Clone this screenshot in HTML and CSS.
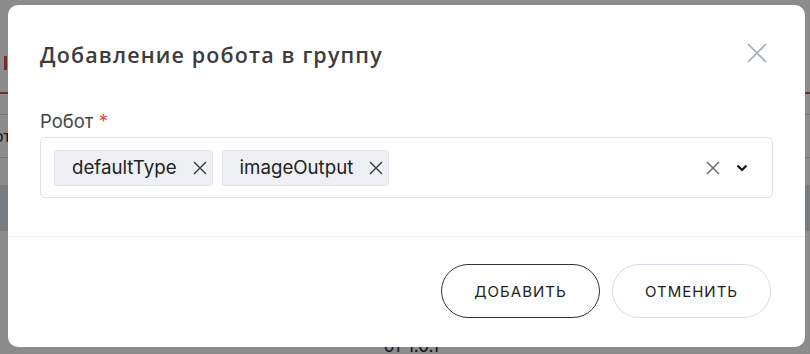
FILE: index.html
```html
<!DOCTYPE html>
<html lang="ru">
<head>
    <meta charset="UTF-8">
    <title>Добавление робота в группу</title>
    <link rel="stylesheet" href="styles.css">
</head>
<body>
    <div class="page-behind">
        <div class="behind-tab"></div>
        <div class="behind-line behind-line--red"></div>
        <div class="behind-line behind-line--one"></div>
        <div class="behind-text">от</div>
        <div class="behind-line behind-line--two"></div>
        <div class="behind-band"></div>
        <div class="behind-version">от 1.0.1</div>
    </div>

    <div class="overlay">
        <div class="modal">
            <div class="modal-header">
                <h2 class="modal-title">Добавление робота в группу</h2>
                <button class="modal-close" aria-label="Закрыть">
                    <svg width="20" height="20" viewBox="0 0 20 20"><path d="M1 1L19 19M19 1L1 19" stroke="currentColor" stroke-width="1.6" fill="none"/></svg>
                </button>
            </div>

            <div class="modal-body">
                <label class="field-label">Робот <span class="required">*</span></label>
                <div class="select">
                    <div class="select-tags">
                        <span class="tag">defaultType
                            <svg class="tag-remove" width="14" height="14" viewBox="0 0 14 14"><path d="M1 1L13 13M13 1L1 13" stroke="currentColor" stroke-width="1.3" fill="none"/></svg>
                        </span>
                        <span class="tag">imageOutput
                            <svg class="tag-remove" width="14" height="14" viewBox="0 0 14 14"><path d="M1 1L13 13M13 1L1 13" stroke="currentColor" stroke-width="1.3" fill="none"/></svg>
                        </span>
                    </div>
                    <div class="select-actions">
                        <svg class="select-clear" width="14" height="14" viewBox="0 0 14 14"><path d="M1 1L13 13M13 1L1 13" stroke="currentColor" stroke-width="1.4" fill="none"/></svg>
                        <svg class="select-arrow" width="12" height="8" viewBox="0 0 12 8"><path d="M1.5 1.5L6 6L10.5 1.5" stroke="currentColor" stroke-width="2.2" fill="none"/></svg>
                    </div>
                </div>
            </div>

            <div class="modal-footer">
                <button class="btn btn--primary">Добавить</button>
                <button class="btn btn--secondary">Отменить</button>
            </div>
        </div>
    </div>
</body>
</html>
```

FILE: styles.css
```css
* {
    margin: 0;
    padding: 0;
    box-sizing: border-box;
}

body {
    width: 810px;
    height: 354px;
    overflow: hidden;
    position: relative;
    background: #fff;
    font-family: 'Inter', 'Noto Sans', sans-serif;
    color: #222;
}

/* page under the overlay */
.page-behind {
    position: absolute;
    inset: 0;
}

.behind-tab {
    position: absolute;
    left: 4px;
    top: 56px;
    width: 3px;
    height: 14px;
    background: #d9534f;
}

.behind-line {
    position: absolute;
    left: 0;
    right: 0;
    height: 1px;
    background: #d0d4dc;
}

.behind-line--red {
    top: 92px;
    height: 2px;
    background: #e0523f;
}

.behind-line--one { top: 114px; }
.behind-line--two { top: 157px; }

.behind-text {
    position: absolute;
    left: -6px;
    top: 126px;
    font-size: 16px;
    color: #222;
}

.behind-band {
    position: absolute;
    left: 0;
    right: 0;
    top: 185px;
    height: 46px;
    background: #dfe3ea;
}

.behind-version {
    position: absolute;
    left: 384px;
    top: 336px;
    font-size: 17px;
    color: #222;
}

.overlay {
    position: absolute;
    inset: 0;
    background: rgba(0, 0, 0, 0.45);
    padding: 5px 5px 7px 8px;
}

.modal {
    width: 797px;
    height: 342px;
    background: #fff;
    border-radius: 10px;
    display: flex;
    flex-direction: column;
}

.modal-header {
    display: flex;
    justify-content: space-between;
    align-items: flex-start;
    padding: 37px 38px 0 32px;
}

.modal-title {
    font-family: 'Open Sans', sans-serif;
    font-size: 21.5px;
    font-weight: 600;
    line-height: 26px;
    letter-spacing: 1.15px;
    color: #3c3c3c;
}

.modal-close {
    border: none;
    background: none;
    color: #a3acb9;
    width: 20px;
    height: 20px;
    margin-top: 1px;
}

.modal-close svg { display: block; }

.modal-body {
    padding: 42px 32px 38px;
    border-bottom: 1px solid #eef0f5;
}

.field-label {
    display: block;
    font-size: 18.5px;
    line-height: 22px;
    color: #444;
    margin-bottom: 5px;
}

.required {
    color: #e5484d;
}

.select {
    height: 61px;
    border: 1px solid #dde1e8;
    border-radius: 5px;
    padding: 0 24px 0 13px;
    display: flex;
    align-items: center;
    justify-content: space-between;
}

.select-tags {
    display: flex;
    gap: 9px;
}

.tag {
    display: flex;
    align-items: center;
    gap: 16px;
    height: 36px;
    padding: 0 5px 0 17px;
    background: #eef0f4;
    border: 1px solid #dfe2e8;
    border-radius: 3px;
    font-size: 18.7px;
    color: #222;
}

.tag-remove {
    color: #333;
}

.select-actions {
    display: flex;
    align-items: center;
    gap: 16px;
}

.select-clear { color: #666; }
.select-arrow { color: #111; }

.modal-footer {
    flex: 1;
    display: flex;
    justify-content: flex-end;
    align-items: center;
    gap: 12px;
    padding: 0 34px 2px;
}

.btn {
    width: 159px;
    height: 54px;
    border-radius: 27px;
    background: #fff;
    font-family: 'Inter', sans-serif;
    font-size: 15px;
    font-weight: 400;
    letter-spacing: 1px;
    text-transform: uppercase;
    color: #222;
}

.btn--primary { border: 1px solid #333; }
.btn--secondary { border: 1px solid #d5dbe6; }
```
